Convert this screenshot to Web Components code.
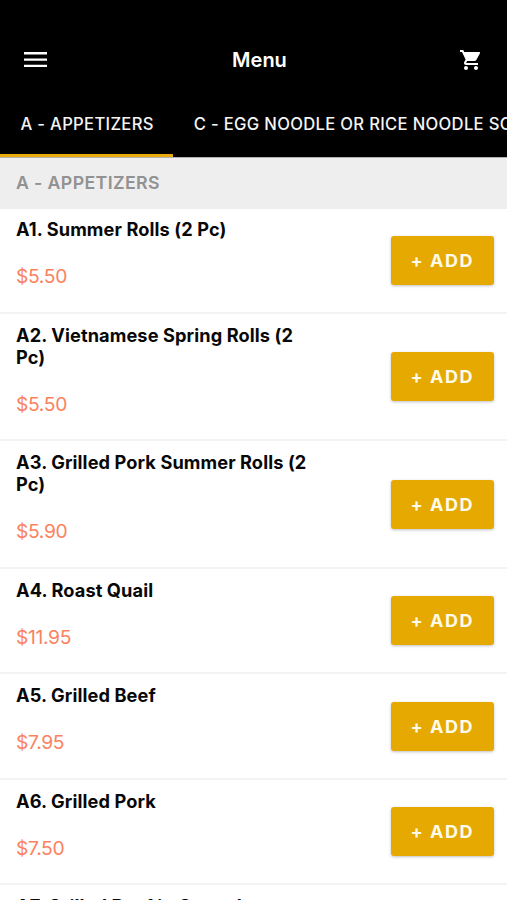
<!DOCTYPE html>
<html lang="en">
<head>
<meta charset="utf-8">
<title>Menu</title>
<style>
html,body{margin:0;height:900px;overflow:hidden;background:#fff;font-family:Inter,"Liberation Sans",sans-serif}
</style>
</head>
<body>
<menu-app></menu-app>
<script>
const define = (name, html, setup) => customElements.define(name, class extends HTMLElement {
  connectedCallback() {
    if (this.shadowRoot) return;
    this.attachShadow({mode: 'open'}).innerHTML = html;
    if (setup) setup(this, this.shadowRoot);
  }
});

define('app-header', `
<style>
:host{display:grid;grid-template-columns:24px 1fr 24px;align-items:center;box-sizing:border-box;height:90px;padding:30px 24px 0;background:#000;color:#fff}
svg{display:block}
h1{margin:0 0 0 12px;text-align:center;font-size:20px;line-height:24px;font-weight:600}
</style>
<svg width="24" height="24" viewBox="0 0 24 24"><path d="M0 5.300h23M0 11.600h23M0 17.900h23" stroke="#fff" stroke-width="2.400"/></svg>
<h1><slot></slot></h1>
<svg width="24" height="24" viewBox="0 0 24 24" fill="#fff"><path d="M7 18c-1.100 0-1.990.9-1.990 2S5.900 22 7 22s2-.9 2-2-.9-2-2-2zM1 2v2h2l3.600 7.590-1.350 2.450c-.16.280-.25.610-.25.960 0 1.100.9 2 2 2h12v-2H7.420c-.14 0-.25-.11-.25-.25l.03-.12.900-1.630h7.450c.75 0 1.410-.41 1.750-1.030l3.580-6.490A1 1 0 0 0 20 4H5.210l-.94-2H1zm16 16c-1.100 0-1.990.9-1.990 2s.89 2 1.990 2 2-.9 2-2-.9-2-2-2z"/></svg>`);

define('category-tab', `
<style>
:host{display:flex;flex:none;align-items:center;box-sizing:border-box;height:67px;padding:3px 19.500px 0 20.500px;color:#f4f4f4;font-size:16.600px;font-weight:500;white-space:nowrap;letter-spacing:.32px;border-bottom:3px solid transparent}
:host([active]){border-color:#eaac0c}
</style><slot></slot>`);

define('tab-strip', `
<style>:host{display:flex;height:67px;background:#000;overflow:hidden}</style><slot></slot>`);

define('section-title', `
<style>:host{display:flex;align-items:center;box-sizing:border-box;height:51.500px;padding:0 16px 1px;background:#eee;color:#929292;border-top:1px solid #b5b0b0;font-size:17.800px;line-height:22px;font-weight:600;letter-spacing:.35px}</style><slot></slot>`);

define('add-button', `
<style>
:host{display:block;flex:none}
button{display:block;width:102.500px;height:49px;padding:0;border:0;border-radius:3px;background:#e5a902;color:#fffbe8;font:650 18px/49px Inter,sans-serif;letter-spacing:1.500px;box-shadow:0 1px 3px rgba(0,0,0,.25)}
</style><button><slot>+ ADD</slot></button>`);

define('menu-item', `
<style>
:host{display:flex;justify-content:space-between;align-items:center;box-sizing:border-box;padding:9.900px 13.500px 22.600px 16px;border-bottom:2px solid #f3f3f3;background:#fff}
.info{width:310px}
.name{font-size:18.200px;line-height:22px;font-weight:650;color:#080808;letter-spacing:.1px}
.price{margin-top:24px;height:25px;line-height:25px;font-size:19.300px;color:#fa8260;letter-spacing:-.35px}
add-button{position:relative;top:6.300px}
</style>
<div class="info"><div class="name"><slot></slot></div><div class="price"></div></div><add-button></add-button>`,
(el, root) => { root.querySelector('.price').textContent = el.getAttribute('price'); });

define('menu-app', `
<style>:host{display:flex;flex-direction:column;width:507px;height:900px;overflow:hidden}
:host>*{flex:none}</style>
<app-header>Menu</app-header>
<tab-strip><category-tab active>A - APPETIZERS</category-tab><category-tab>C - EGG NOODLE OR RICE NOODLE SOUP</category-tab></tab-strip>
<section-title>A - APPETIZERS</section-title>
<menu-item price="$5.50">A1. Summer Rolls (2 Pc)</menu-item>
<menu-item price="$5.50">A2. Vietnamese Spring Rolls (2<br>Pc)</menu-item>
<menu-item price="$5.90">A3. Grilled Pork Summer Rolls (2<br>Pc)</menu-item>
<menu-item price="$11.95">A4. Roast Quail</menu-item>
<menu-item price="$7.95">A5. Grilled Beef</menu-item>
<menu-item price="$7.50">A6. Grilled Pork</menu-item>
<menu-item price="$8.50">A7. Grilled Beef in Grape Leaves</menu-item>`);
</script>
</body>
</html>
